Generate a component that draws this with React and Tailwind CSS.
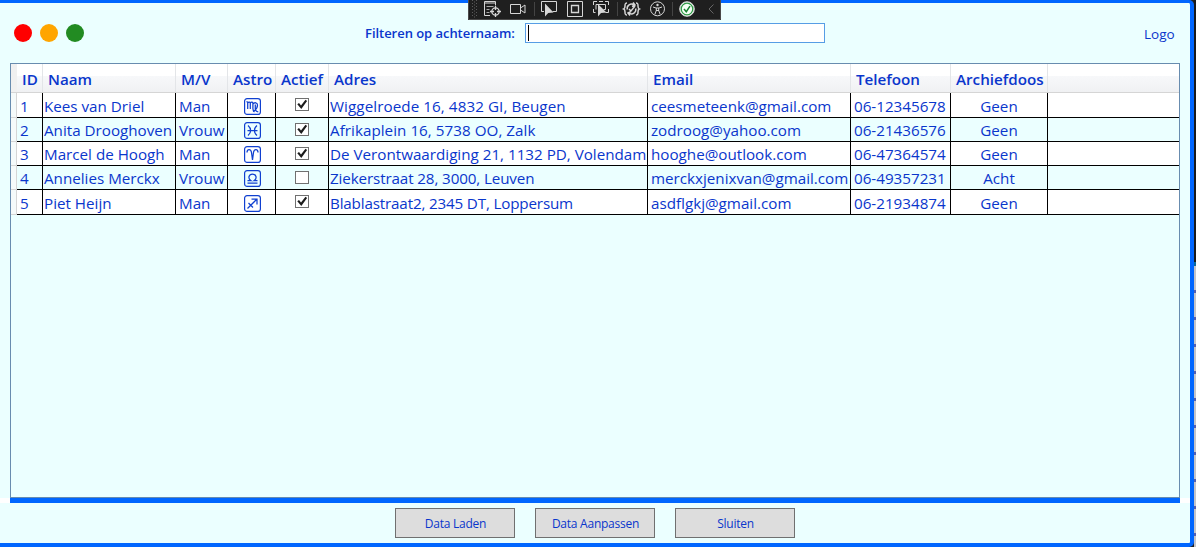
import React from "react";

const COLS =
  "grid w-[1162px] shrink-0 grid-rows-1 grid-cols-[26px_133px_52px_48px_53px_319px_203px_100px_97px_131px]";

const HEADERS = ["ID", "Naam", "M/V", "Astro", "Actief", "Adres", "Email", "Telefoon", "Archiefdoos"];

const ROWS = [
  { id: 1, naam: "Kees van Driel", mv: "Man", astro: "virgo", actief: true, adres: "Wiggelroede 16, 4832 GI, Beugen", adresFit: "tracking-[0.080px]", email: "ceesmeteenk@gmail.com", tel: "06-12345678", doos: "Geen", h: "h-[25px]", iconTop: "mt-[5px]", textTop: "leading-[27px]" },
  { id: 2, naam: "Anita Drooghoven", mv: "Vrouw", astro: "pisces", actief: true, adres: "Afrikaplein 16, 5738 OO, Zalk", adresFit: "tracking-[0.040px]", email: "zodroog@yahoo.com", tel: "06-21436576", doos: "Geen", h: "h-[24px]", iconTop: "mt-[4px]", textTop: "leading-[25px]" },
  { id: 3, naam: "Marcel de Hoogh", mv: "Man", astro: "aries", actief: true, adres: "De Verontwaardiging 21, 1132 PD, Volendam", adresFit: "", email: "hooghe@outlook.com", tel: "06-47364574", doos: "Geen", h: "h-[24px]", iconTop: "mt-[4px]", textTop: "leading-[25px]" },
  { id: 4, naam: "Annelies Merckx", mv: "Vrouw", astro: "libra", actief: false, adres: "Ziekerstraat 28, 3000, Leuven", adresFit: "tracking-[-0.120px]", email: "merckxjenixvan@gmail.com", tel: "06-49357231", doos: "Acht", h: "h-[24px]", iconTop: "mt-[4px]", textTop: "leading-[25px]" },
  { id: 5, naam: "Piet Heijn", mv: "Man", astro: "sagittarius", actief: true, adres: "Blablastraat2, 2345 DT, Loppersum", adresFit: "tracking-[-0.160px]", email: "asdflgkj@gmail.com", tel: "06-21934874", doos: "Geen", h: "h-[25px]", iconTop: "mt-[5px]", textTop: "leading-[27px]" },
];

const SIGNS = {
  virgo: "M2.500 3.500l1.200.7v6.800M3.700 5c1-1.300 2.600-1 2.600.5v5.500M6.300 5c1-1.300 2.600-1 2.600.5v5c0 1.500.6 2.700 1.600 3.500M8.900 6c1.500-2 4.600-1.500 4.600 1 0 3-1.500 5-4.500 6.500M11.300 6.500v4.500c0 1.500 1.200 2.500 3 3",
  pisces: "M4 3.500c3.500 3 3.500 7 0 10M13 3.500c-3.500 3-3.500 7 0 10M3.500 8.500h10",
  aries: "M3 6.500c0-4 4-4 4.500 0l1 7.500 1-7.500c.5-4 4.500-4 4.500 0",
  libra: "M3.500 13h10M3.500 10.500h3.200c-3-2-2-6.500 1.800-6.500s4.800 4.500 1.800 6.500h3.200",
  sagittarius: "M3.500 13.500l9.500-9.500M7.500 4h5.500v5.500M4.500 8l4.500 4.500",
};

function Sign({ name }) {
  return (
    <svg width="17" height="17" viewBox="0 0 17 17" fill="none" stroke="#1040d0">
      <rect x=".6" y=".6" width="15.800" height="15.800" rx="2.500" strokeWidth="1.200" />
      <path d={SIGNS[name]} strokeWidth="1.250" />
    </svg>
  );
}

function Check({ on }) {
  return (
    <svg width="14" height="13" viewBox="0 0 14 13">
      <rect x=".5" y=".5" width="13" height="12" fill="#fff" stroke="#707070" />
      {on && <path d="M2.300 6.200l1.700-1.100 2 2.400 4.500-5.700 1.600 1.200L6.300 11z" fill="#1c1c1c" />}
    </svg>
  );
}

function Cell({ children, className = "" }) {
  return (
    <div className={"h-full whitespace-nowrap border-b border-black " + className}>
      {children}
    </div>
  );
}

function DebugBar() {
  return (
    <svg className="absolute left-[468px] top-0" width="253" height="20" viewBox="0 0 253 20" fill="none" stroke="#d6d6d6">
      <rect width="253" height="20" fill="#1f1f1f" stroke="none" />
      <path d="M.5 0v19.500h252V0" stroke="#4a4a4a" />
      <g stroke="#5c5c5c" strokeDasharray="1 2">
        <path d="M4.500 0v18M8.500 0v18" />
        <path d="M6.500 1.500v16" />
      </g>
      <g stroke="#444">
        <path d="M66.500 2v14M149.500 2v14M204.500 2v14" />
      </g>
      <path d="M22 15.500h-5.500v-14h11v4M16 3h12" />
      <path d="M18.500 6.500h7M18.500 9.500h3M18.500 12.500h3" stroke="#aaa" />
      <circle cx="27.500" cy="11.500" r="3.700" strokeWidth="1.300" />
      <path d="M27.500 6v4M27.500 13v4M22 11.500h4M29 11.500h4" strokeWidth="1.300" />
      <path d="M42.500 4.500h10v9h-10zM52.500 8l4.500-3v8l-4.500-3" />
      <path d="M76 11.500h-2.500v-10h15v10h-4" />
      <path d="M77 3.500v13l3.200-3.500 5.300-.5z" fill="#d6d6d6" stroke="none" />
      <path d="M99.500 1.500h15v15h-15z" />
      <path d="M103.500 5.500h7v7h-7z" strokeWidth="1.300" />
      <path d="M125.500 5v-3.500h3.500M137 1.500h3.500V5M125.500 9v3.500h2M140.500 9v3.500h-3M131 1.500h4M128 9.500V4.500h9.500v5h-2" />
      <path d="M130 4v12.500l3-3.500 5.500-.5z" fill="#d6d6d6" stroke="none" />
      <path d="M159 3c-2 0-2 1-2 3s0 2.500-1.200 3c1.200.5 1.200 1 1.200 3s0 3 2 3M168 3c2 0 2 1 2 3s0 2.500 1.200 3c-1.200.5-1.200 1-1.200 3s0 3-2 3" strokeWidth="1.500" />
      <path d="M159.300 9.500a4.300 4.300 0 0 1 6.700-4.500M167.700 8.500a4.300 4.300 0 0 1-6.700 4.500M165 2.500l2 2.500-3 1.500M162 15.500l-2-2.500 3-1.500M161 9l2 2 4-5" strokeWidth="1.500" />
      <circle cx="189.500" cy="8.800" r="7" />
      <circle cx="189.500" cy="5" r="1.200" fill="#d6d6d6" stroke="none" />
      <path d="M185 7l3 1h3l3-1M188.300 8v2.500l-1.500 4M190.700 8v2.500l1.500 4M188 10.500h3" />
      <circle cx="219" cy="9" r="7.300" fill="#fff" stroke="#d6d6d6" />
      <circle cx="219" cy="9" r="5.800" fill="#f4fff4" stroke="#2e9a44" strokeWidth="1.300" />
      <path d="M216 9l2.300 2.700 3.700-5.500" stroke="#168030" strokeWidth="1.500" />
      <path d="M245.500 4.500L241 9l4.500 4.500" stroke="#666" />
    </svg>
  );
}

function Button({ children }) {
  return (
    <button className="h-[30px] w-[120px] border border-[#707070] bg-[#dddddd] pl-px pt-px text-[12px] leading-[28px] tracking-[-0.240px]">
      {children}
    </button>
  );
}

export default function App() {
  return (
    <div className="relative flex h-[547px] w-[1196px] overflow-hidden bg-[#222] font-['Open_Sans','Noto_Sans',sans-serif] text-[#0a36cc]">
      <div className="flex h-[547px] w-[1194px] flex-col rounded-r-[5px] border-y-[4px] border-r-[4px] border-t-[3px] border-[#0066ff] bg-[#ebffff]">
        <header className="flex h-[60px] items-center">
          <div className="ml-[14px] flex gap-[8px]">
            <span className="size-[18px] rounded-full bg-[#ff0000]" />
            <span className="size-[18px] rounded-full bg-[#ffa500]" />
            <span className="size-[18px] rounded-full bg-[#228b22]" />
          </div>
          <label className="ml-[281px] w-[160px] whitespace-nowrap pt-[2px] text-[13px] font-semibold tracking-[-0.040px]">
            Filteren op achternaam:
          </label>
          <div className="flex h-[20px] w-[300px] items-center border border-[#569de5] bg-white pl-[2px]">
            <span className="h-[16px] w-px bg-black" />
          </div>
          <span className="ml-[319px] pt-[2px] text-[13.500px]">Logo</span>
        </header>

        <main className="ml-[10px] flex h-[435px] w-[1170px] flex-col border border-[#688caf]">
          <div className="flex h-[29px] border-b border-[#d5d5d5] bg-[linear-gradient(to_bottom,#ffffff_0,#ffffff_12px,#f7f8fa_12px,#f0f1f3_28px)]">
            <div className="w-[6px] shrink-0 bg-[#f0f0f0]" />
            <div className={COLS}>
              {HEADERS.map((label) => (
                <div key={label} className="whitespace-nowrap border-r border-[#e3e5e8] pl-[5px] text-[15.200px] font-semibold leading-[30px]">
                  {label}
                </div>
              ))}
            </div>
          </div>
          {ROWS.map((r) => (
            <div key={r.id} className={"flex text-[15.200px] odd:bg-[#ebffff] even:bg-white " + r.h}>
              <div className="w-[6px] shrink-0 border-r border-b border-[#d5d5d5] bg-[#f5fafa]" />
              <div className={COLS + " " + r.textTop}>
                <Cell className="border-r pl-[3px]">{r.id}</Cell>
                <Cell className="border-r pl-[1px]">{r.naam}</Cell>
                <Cell className="border-r pl-[3px]">{r.mv}</Cell>
                <Cell className="border-r pl-[16px]">
                  <div className={r.iconTop}><Sign name={r.astro} /></div>
                </Cell>
                <Cell className="border-r pl-[19px] pt-[5px]"><Check on={r.actief} /></Cell>
                <Cell className={"border-r pl-[1px] " + r.adresFit}>{r.adres}</Cell>
                <Cell className="border-r pl-[3px]">{r.email}</Cell>
                <Cell className="border-r pl-[3px]">{r.tel}</Cell>
                <Cell className="border-r text-center">{r.doos}</Cell>
                <Cell />
              </div>
            </div>
          ))}
        </main>

        <div className="flex h-[5px]">
          <div className="w-[10px] bg-white" />
          <div className="w-[1170px] bg-[#0066ff]" />
          <div className="w-[10px] bg-white" />
        </div>
        <footer className="ml-[395px] mt-[5px] flex gap-[20px]">
          <Button>Data Laden</Button>
          <Button>Data Aanpassen</Button>
          <Button>Sluiten</Button>
        </footer>
      </div>
      <div className="flex w-[2px] flex-col">
        <div className="h-[262px] bg-[#1a1a1a]" />
        <div className="h-[4px] bg-[#0a6a9a]" />
        <div className="grow bg-[#c4c4c8] bg-[repeating-linear-gradient(to_bottom,#c4c4c8_0,#c4c4c8_24px,#5560b0_24px,#5560b0_27px)]" />
      </div>
      <DebugBar />
    </div>
  );
}
